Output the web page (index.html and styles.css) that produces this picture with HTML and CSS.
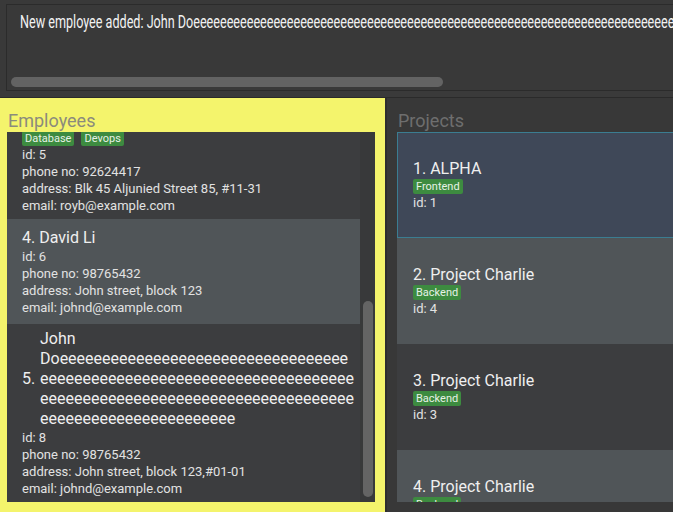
FILE: index.html
```html
<!DOCTYPE html>
<html lang="en">
<head>
<meta charset="utf-8">
<title>Employee Manager</title>
<link rel="stylesheet" href="styles.css">
</head>
<body>
<div class="app">
  <div class="result-area">
    <div class="result">
      <div class="result-text"><span class="result-line">New employee added: John Doeeeeeeeeeeeeeeeeeeeeeeeeeeeeeeeeeeeeeeeeeeeeeeeeeeeeeeeeeeeeeeeeeeeeeeeeeeeeeeeeeeeeeeeeeeeeeeeeeeeeeeeeeeeeeeeeeeeeeeeeeeeeeeeeee; Phone: 98765432; Email: johnd@example.com; Address: John street, block 123,#01-01</span></div>
      <div class="hbar"><div class="hthumb"></div></div>
    </div>
  </div>
  <div class="split"></div>
  <div class="main">
    <section class="panel employees">
      <h2 class="panel-title">Employees</h2>
      <div class="list">
        <div class="cells">
          <div class="ecell dark first">
            <div class="ename">3. Roy Balakrishnan</div>
            <div class="tags"><span class="tag">Database</span><span class="tag">Devops</span></div>
            <div class="detail">id: 5</div>
            <div class="detail">phone no: 92624417</div>
            <div class="detail">address: Blk 45 Aljunied Street 85, #11-31</div>
            <div class="detail">email: royb@example.com</div>
          </div>
          <div class="ecell light second">
            <div class="ename">4. David Li</div>
            <div class="detail">id: 6</div>
            <div class="detail">phone no: 98765432</div>
            <div class="detail">address: John street, block 123</div>
            <div class="detail">email: johnd@example.com</div>
          </div>
          <div class="ecell dark third">
            <div class="ename-row">
              <span class="idx">5.</span>
              <span class="ename wrap">John Doeeeeeeeeeeeeeeeeeeeeeeeeeeeeeeeeeeeeeeeeeeeeeeeeeeeeeeeeeeeeeeeeeeeeeeeeeeeeeeeeeeeeeeeeeeeeeeeeeeeeeeeeeeeeeeeeeeeeeeeeeeeeeeeeeee</span>
            </div>
            <div class="detail">id: 8</div>
            <div class="detail">phone no: 98765432</div>
            <div class="detail">address: John street, block 123,#01-01</div>
            <div class="detail">email: johnd@example.com</div>
          </div>
        </div>
        <div class="vbar"><div class="vthumb"></div></div>
      </div>
    </section>
    <section class="panel projects">
      <h2 class="panel-title">Projects</h2>
      <div class="plist">
        <div class="pcell selected">
          <div class="ptitle">1. ALPHA</div>
          <div class="tags"><span class="tag">Frontend</span></div>
          <div class="pdetail">id: 1</div>
        </div>
        <div class="pcell light">
          <div class="ptitle">2. Project Charlie</div>
          <div class="tags"><span class="tag">Backend</span></div>
          <div class="pdetail">id: 4</div>
        </div>
        <div class="pcell dark">
          <div class="ptitle">3. Project Charlie</div>
          <div class="tags"><span class="tag">Backend</span></div>
          <div class="pdetail">id: 3</div>
        </div>
        <div class="pcell light">
          <div class="ptitle">4. Project Charlie</div>
          <div class="tags"><span class="tag">Backend</span></div>
          <div class="pdetail">id: 2</div>
        </div>
      </div>
    </section>
  </div>
</div>
</body>
</html>
```
FILE: styles.css
```css
html, body {
  margin: 0;
  padding: 0;
  width: 673px;
  height: 512px;
  overflow: hidden;
}

body {
  background: #393939;
  font-family: Roboto, "Liberation Sans", sans-serif;
  color: #e6e6e6;
}

.app {
  display: flex;
  flex-direction: column;
  height: 512px;
}

/* ---------- result box ---------- */
.result-area {
  padding: 4px 0 0 6px;
  height: 87px;
}

.result {
  height: 87px;
  box-sizing: border-box;
  border: 1px solid #2b2b2b;
  border-right: none;
  background: #393939;
  display: flex;
  flex-direction: column;
  overflow: hidden;
}

.result-text {
  padding: 6px 0 0 13px;
  white-space: nowrap;
  font-size: 18px;
  line-height: 22px;
  color: #f2f2f2;
}

.result-line {
  display: inline-block;
  transform: scaleX(0.7);
  transform-origin: left center;
}

.hbar {
  margin-top: auto;
  padding: 0 0 3px 4px;
}

.hthumb {
  width: 432px;
  height: 10px;
  border-radius: 5px;
  background: #636363;
}

.split {
  height: 6px;
  border-bottom: 1px solid #2a2a2a;
  background: #3a3a3a;
}

/* ---------- panels ---------- */
.main {
  display: flex;
  height: 414px;
}

.panel {
  box-sizing: border-box;
  height: 414px;
}

.panel-title {
  margin: 0 0 0 1px;
  font-size: 18px;
  line-height: 22px;
  font-weight: 400;
}

.employees {
  width: 385px;
  flex: none;
  background: #f4f46c;
  padding: 12px 10px 0 7px;
}

.employees .panel-title {
  color: #8b8b7c;
}

.projects {
  flex: 1;
  background: #383838;
  border-left: 2px solid #2e2e2e;
  padding: 12px 0 0 10px;
  overflow: hidden;
}

.projects .panel-title {
  color: #6e6e6e;
}

/* ---------- employee list ---------- */
.list {
  height: 370px;
  display: flex;
  background: #3b3c3e;
}

.cells {
  width: 353px;
  flex: none;
  overflow: hidden;
}

.ecell {
  padding: 9px 4px 8px 15px;
  font-size: 13px;
  line-height: 17px;
  color: #e2e2e2;
}

.dark { background: #3c3d3f; }
.light { background: #505558; }

.ecell.first {
  margin-top: -30px;
  padding-bottom: 5px;
}

.ecell.third {
  padding-top: 5px;
}

.ename {
  font-size: 16px;
  line-height: 20px;
  color: #efefef;
}

.ename-row {
  display: flex;
  align-items: center;
}

.idx {
  width: 18px;
  flex: none;
  font-size: 16px;
  line-height: 20px;
  color: #efefef;
}

.ename.wrap {
  flex: 1;
  min-width: 0;
  overflow-wrap: anywhere;
}

.tags {
  display: flex;
  gap: 7px;
  height: 15px;
}

.tag {
  background: #3d8b40;
  color: #e6f1e6;
  font-size: 11px;
  line-height: 15px;
  padding: 0 3px;
  border-radius: 2px;
}

.vbar {
  width: 15px;
  flex: none;
  background: #38393a;
  padding: 169px 2px 0 3px;
  box-sizing: border-box;
}

.vthumb {
  height: 196px;
  border-radius: 5px;
  background: #646464;
}

/* ---------- project list ---------- */
.plist {
  height: 370px;
  overflow: hidden;
  margin-right: -10px;
  background: #3c3d3f;
}

.pcell {
  height: 106px;
  box-sizing: border-box;
  padding-left: 16px;
  display: flex;
  flex-direction: column;
  justify-content: center;
}

.pcell.selected {
  background: #3f4858;
  border: 1px solid #3b7d91;
  padding-left: 15px;
}

.ptitle {
  font-size: 16px;
  line-height: 20px;
  color: #efefef;
}

.pdetail {
  margin-top: 1px;
  font-size: 13px;
  line-height: 16px;
  color: #e2e2e2;
}
```
